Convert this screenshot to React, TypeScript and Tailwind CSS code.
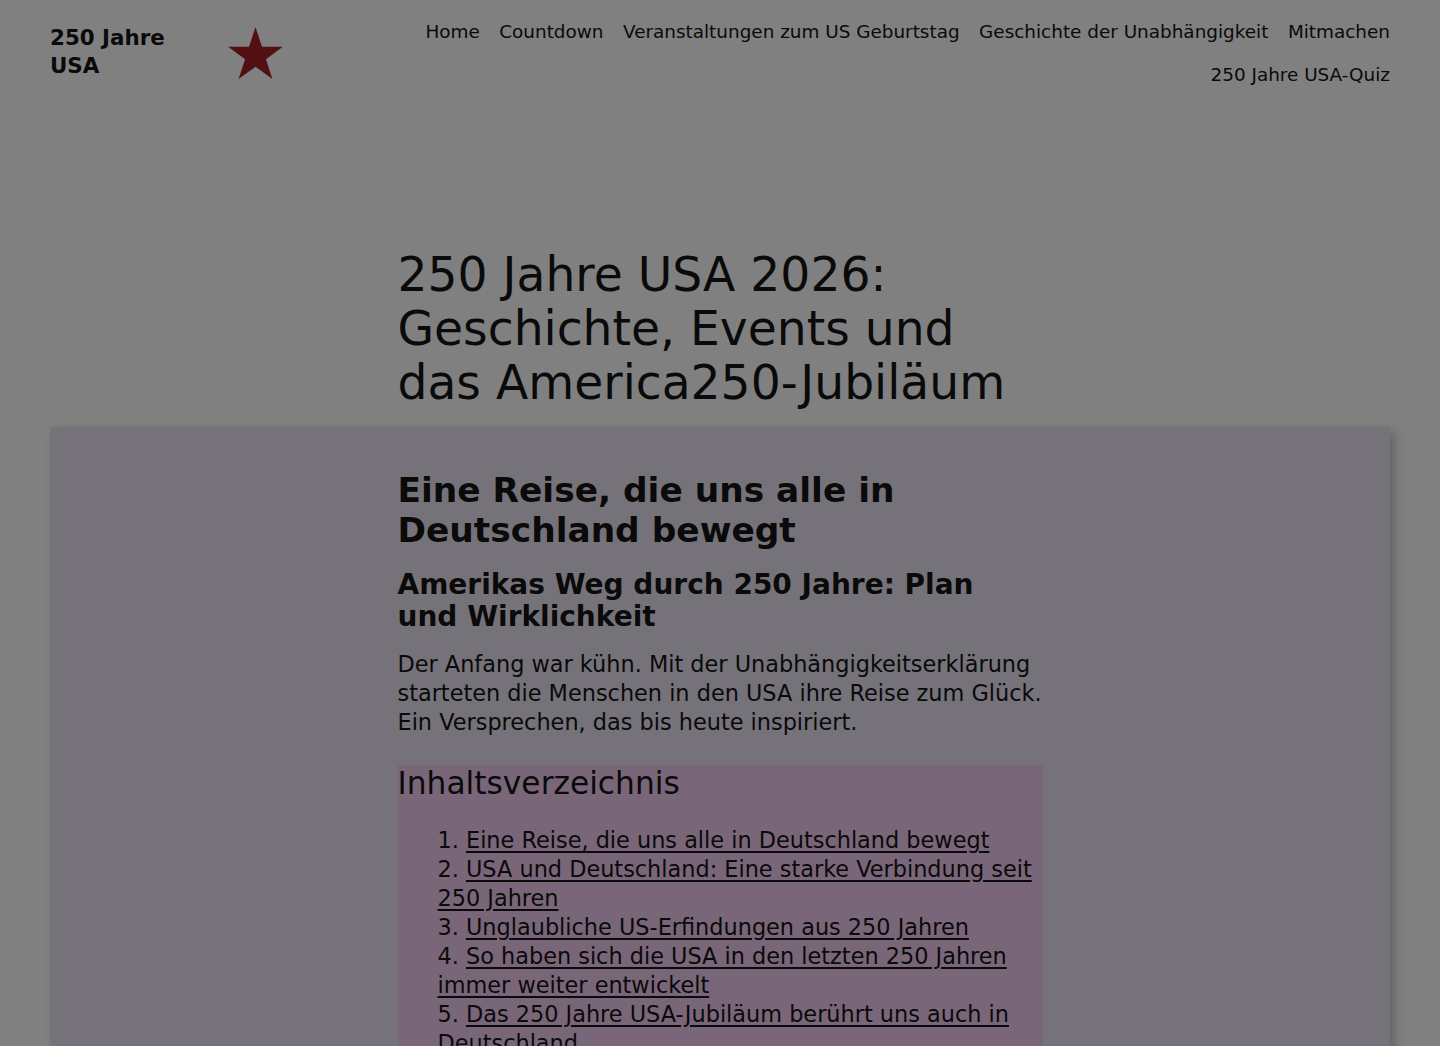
import React from 'react';

const navItems = [
  'Home',
  'Countdown',
  'Veranstaltungen zum US Geburtstag',
  'Geschichte der Unabhängigkeit',
  'Mitmachen',
  '250 Jahre USA-Quiz',
];

const tocItems = [
  'Eine Reise, die uns alle in Deutschland bewegt',
  'USA und Deutschland: Eine starke Verbindung seit 250 Jahren',
  'Unglaubliche US-Erfindungen aus 250 Jahren',
  'So haben sich die USA in den letzten 250 Jahren immer weiter entwickelt',
  'Das 250 Jahre USA-Jubiläum berührt uns auch in Deutschland',
  'Feiern, erinnern, mitmachen',
];

const Star = () => (
  <svg width="55" height="52" viewBox="-0.951 -1 1.902 1.809" className="block">
    <polygon
      fill="#521012"
      points="0,-1 0.2245,-0.309 0.951,-0.309 0.363,0.118 0.588,0.809 0,0.382 -0.588,0.809 -0.363,0.118 -0.951,-0.309 -0.2245,-0.309"
    />
  </svg>
);

export default function App() {
  return (
    <div className="h-screen overflow-hidden bg-[#808080] text-[#0a0a0a] font-['DejaVu_Sans',sans-serif]">
      {/* header */}
      <header className="flex items-start justify-between px-[50px] pt-[10px]">
        <div className="flex items-start shrink-0">
          <div className="w-[178px] mt-[13.5px] text-[21.4px] leading-[28.5px] font-bold">
            250 Jahre
            <br />
            USA
          </div>
          <div className="mt-[17px]">
            <Star />
          </div>
        </div>
        <nav className="flex-1 pl-[40px]">
          <ul className="flex flex-wrap justify-end gap-x-[19.5px] text-[18.4px] leading-[27px]">
            {navItems.map((item) => (
              <li key={item} className="py-2">
                <a href="#" className="text-[#0a0a0a]">{item}</a>
              </li>
            ))}
          </ul>
        </nav>
      </header>

      <main>
        <div className="w-[645px] mx-auto mt-[152px] mb-[17px]">
          <h1 className="text-[47.2px] leading-[54px] font-normal">
            250 Jahre USA 2026: Geschichte, Events und das America250-Jubiläum
          </h1>
        </div>

        <article className="mx-[50px] bg-[#757379] shadow-[5px_4px_10px_rgba(0,0,0,0.22)] pt-[43px] pb-[60px]">
          <div className="w-[645px] mx-auto">
            <h2 className="text-[34.4px] leading-[40px] font-bold mb-[19px]">
              Eine Reise, die uns alle in Deutschland bewegt
            </h2>
            <h3 className="text-[28px] leading-[32px] font-bold mb-[17px]">
              Amerikas Weg durch 250 Jahre: Plan und Wirklichkeit
            </h3>
            <p className="text-[22.4px] leading-[29px] mb-[28px] mt-[1px]">
              Der Anfang war kühn. Mit der Unabhängigkeitserklärung starteten die Menschen in den USA ihre Reise zum Glück. Ein Versprechen, das bis heute inspiriert.
            </p>

            <div className="bg-[#7a6679] pb-6">
              <h2 className="text-[31.3px] leading-[36px] font-normal">Inhaltsverzeichnis</h2>
              <ol className="list-decimal list-inside pl-[40px] mt-[25px] text-[22.4px] leading-[29px]">
                {tocItems.map((item) => (
                  <li key={item}>
                    <a href="#" className="underline underline-offset-[3px]">{item}</a>
                  </li>
                ))}
              </ol>
            </div>
          </div>
        </article>
      </main>
    </div>
  );
}
